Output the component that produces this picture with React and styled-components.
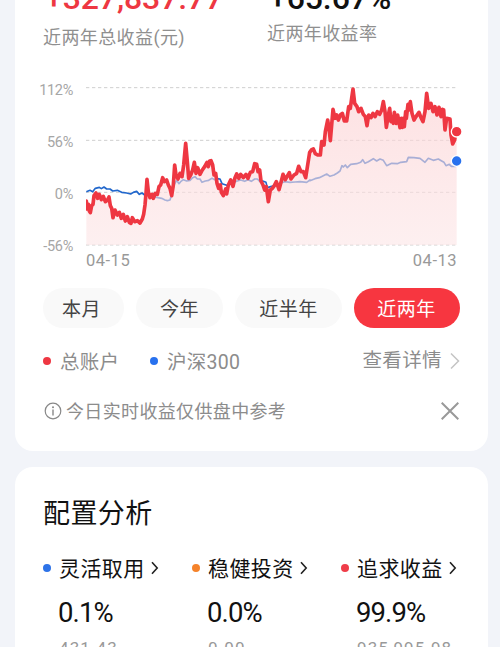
import React from "react";
import styled, { createGlobalStyle } from "styled-components";

// chart units are thirds of a pixel, each series is recorded in three runs
const run = (offset, points) =>
  points.split(" ").map((p) => {
    const [x, y] = p.split(",").map(Number);
    return [x + offset, y];
  });

const account = [
  ...run(0, "169,378 171,402 175,388 178,408 181,413 185,392 189,388 192,362 198,354 203,370 208,358 214,374 220,364 226,380 232,376 237,366 241,392 245,400 249,428 255,405 262,420 268,412 274,430 280,418 286,438 292,425 298,442 303,445 307,428 314,440 322,437 330,444 337,432 341,418 345,390 348,355 351,313 355,350 360,368 366,358 370,370 376,355 382,358 387,335 392,330 398,308 403,320 410,315 415,330 420,340 425,362 430,330 434,270 438,300 444,312 450,295 456,305 461,270"),
  ...run(390, "77,205 82,260 86,310 92,300 98,285 103,262 108,295 113,278 120,298 127,285 134,275 141,262 145,275 149,258 153,257 158,270 162,300 167,295 171,325 176,340 181,330 184,352 190,362 197,342 200,357 205,330 212,315 219,334 225,308 230,297 236,310 242,298 250,308 258,298 264,310 271,292 278,290 284,266 290,268 294,290 299,285 303,318 309,330 314,345 319,335 325,380 331,345 337,340 343,332 349,320 357,344 364,318 369,298 376,314 381,305 388,293 393,312 402,300 410,295 416,274 423,290 430,290 437,308 443,270 449,232"),
  ...run(840, "5,224 10,222 16,236 23,240 31,240 35,200 42,210 46,170 53,135 57,160 61,197 65,150 69,103 75,130 80,120 85,135 91,120 97,115 103,138 110,138 116,95 121,100 125,70 129,42 134,85 141,95 146,110 153,100 160,118 166,125 171,152 176,120 183,128 189,115 195,125 202,110 209,118 215,105 220,80 225,110 229,157 235,120 239,100 243,140 246,130 250,145 253,112 259,145 263,120 270,158 274,130 277,157 280,130 283,155 287,110 289,130 294,88 297,105 301,80 306,115 312,135 318,125 327,112 333,128 339,140 345,110 350,55 356,100 363,85 369,110 375,95 381,120 387,97 393,125 397,103 401,105 405,165 410,130 420,132 423,180 428,207 434,195 437,170"),
];

const index300 = [
  ...run(0, "169,350 180,346 188,350 196,340 208,337 214,341 222,336 230,342 240,342 248,348 262,346 275,352 290,354 302,357 310,352 320,349 328,358 336,354 344,360 352,356 360,364 380,367 395,370 405,375 412,377 420,375 426,355 432,330 440,316 447,326 452,320 460,314 470,318"),
  ...run(390, "90,316 98,308 105,305 112,312 120,312 126,322 136,318 146,316 156,310 164,314 172,311 180,312 186,326 198,330 204,333 212,325 222,322 232,318 242,315 254,319 264,314 274,319 284,312 292,312 300,320 308,318 318,322 322,338 332,335 345,332 360,325 375,320 390,322 405,321 420,320 440,322 450,315"),
  ...run(840, "0,317 15,311 28,308 40,302 50,297 60,304 72,300 82,294 90,288 96,272 100,276 106,270 112,278 122,268 140,266 152,262 158,254 165,265 175,260 190,251 200,258 210,252 220,256 230,272 245,265 262,266 272,262 290,260 295,247 312,248 330,250 345,262 355,250 370,256 385,252 395,258 402,262 408,272 418,268 424,274 437,274"),
];

const toPath = (points) => "M" + points.map((p) => p.join(" ")).join("L");

const gridLines = [38, 196, 352, 510];
const yLabels = ["112%", "56%", "0%", "-56%"];

const periods = [
  { label: "本月", width: 81, shift: 4 },
  { label: "今年", width: 87, shift: 0 },
  { label: "近半年", width: 107, shift: 0 },
  { label: "近两年", width: 106, shift: 1, active: true },
];

const allocations = [
  { name: "灵活取用", percent: "0.1%", amount: "431.43", color: "#2d73e8" },
  { name: "稳健投资", percent: "0.0%", amount: "0.00", color: "#f5832b" },
  { name: "追求收益", percent: "99.9%", amount: "935,995.98", color: "#ef3d49" },
];

const ProfitChart = () => (
  <ChartRow>
    <YAxis>
      {yLabels.map((label) => (
        <span key={label}>{label}</span>
      ))}
    </YAxis>
    <Plot>
      <svg width="380" height="166" viewBox="168 18 1140 498">
        <defs>
          <linearGradient id="profitFill" x1="0" y1="0" x2="0" y2="1">
            <stop offset="0" stopColor="#fccfd1" />
            <stop offset="1" stopColor="#fce6e7" />
          </linearGradient>
        </defs>
        {gridLines.map((y) => (
          <path key={y} d={`M168 ${y}H1276`} stroke="#cfcfcf" strokeWidth="3" strokeDasharray="10 8" />
        ))}
        <path d={toPath(index300)} fill="none" stroke="#2167cc" strokeWidth="5" strokeLinejoin="round" />
        <path d={`${toPath(account)}L1280 170V510H169Z`} fill="url(#profitFill)" opacity="0.62" />
        <path d={toPath(account)} fill="none" stroke="#ee3742" strokeWidth="11" strokeLinejoin="round" strokeLinecap="round" />
        <circle cx="1280" cy="170" r="16" fill="#ee3742" stroke="#fff" strokeWidth="4" />
        <circle cx="1280" cy="258" r="16" fill="#2871ee" stroke="#fff" strokeWidth="4" />
      </svg>
      <XAxis>
        <span>04-15</span>
        <span>04-13</span>
      </XAxis>
    </Plot>
  </ChartRow>
);

const App = () => (
  <Page>
    <GlobalStyle />
    <ProfitCard>
      <Summary>
        <Stat $width={224}>
          <Amount $color="#ee3742">+327,837.77</Amount>
          <StatLabel $top={12}>近两年总收益(元)</StatLabel>
        </Stat>
        <Stat>
          <Amount $color="#111">+65.67%</Amount>
          <StatLabel $top={8}>近两年收益率</StatLabel>
        </Stat>
      </Summary>

      <ProfitChart />

      <Periods>
        {periods.map((p) => (
          <Period key={p.label} $width={p.width} $shift={p.shift} $active={p.active}>
            {p.label}
          </Period>
        ))}
      </Periods>

      <Legend>
        <LegendItem $width={107}>
          <Dot $color="#ee3742" />
          <LegendText>总账户</LegendText>
        </LegendItem>
        <LegendItem>
          <Dot $color="#2871ee" />
          <LegendText>沪深300</LegendText>
        </LegendItem>
        <Detail>
          <span>查看详情</span>
          <svg width="10" height="18" viewBox="0 0 10 18">
            <path d="M1 1.5L8.5 9L1 16.5" fill="none" stroke="#c4c4c4" strokeWidth="1.5" />
          </svg>
        </Detail>
      </Legend>

      <Notice>
        <svg width="18" height="18" viewBox="0 0 18 18">
          <circle cx="9" cy="9" r="7.8" fill="none" stroke="#888" strokeWidth="1.2" />
          <path d="M9 7.6V13.4" stroke="#888" strokeWidth="1.4" />
          <circle cx="9" cy="5.2" r="1" fill="#888" />
        </svg>
        <NoticeText>今日实时收益仅供盘中参考</NoticeText>
        <svg width="18" height="18" viewBox="0 0 18 18">
          <path d="M0.7 0.7L17.3 17.3M17.3 0.7L0.7 17.3" stroke="#999" strokeWidth="2" />
        </svg>
      </Notice>
    </ProfitCard>

    <AllocationCard>
      <Title>配置分析</Title>
      <Allocations>
        {allocations.map((a) => (
          <Allocation key={a.name}>
            <AllocationName>
              <Dot $color={a.color} />
              <span>{a.name}</span>
              <svg width="8" height="14" viewBox="0 0 8 14">
                <path d="M1 1.2L6.2 7L1 12.8" fill="none" stroke="#222" strokeWidth="1.6" />
              </svg>
            </AllocationName>
            <Percent>{a.percent}</Percent>
            <Money>{a.amount}</Money>
          </Allocation>
        ))}
      </Allocations>
    </AllocationCard>
  </Page>
);

export default App;

const GlobalStyle = createGlobalStyle`
  * {
    box-sizing: border-box;
  }
  body {
    margin: 0;
    overflow: hidden;
    font-family: Roboto, "Noto Sans CJK SC", sans-serif;
  }
  svg {
    display: block;
    flex-shrink: 0;
  }
`;
const Page = styled.div`
  width: 500px;
  height: 647px;
  overflow: hidden;
  padding: 0 12px 0 15px;
  background: #f2f4f9;
`;
const ProfitCard = styled.section`
  height: 451px;
  padding: 0 27px 0 28px;
  background: #fff;
  border-radius: 0 0 18px 18px;
`;
const Summary = styled.div`
  display: flex;
  height: 81px;
`;
const Stat = styled.div`
  width: ${({ $width }) => ($width ? `${$width}px` : "auto")};
`;
const Amount = styled.div`
  height: 36px;
  margin-top: -20px;
  padding-left: 2px;
  line-height: 36px;
  font-size: 32px;
  font-weight: 500;
  white-space: nowrap;
  letter-spacing: -0.1px;
  color: ${({ $color }) => $color};
`;
const StatLabel = styled.div`
  margin-top: ${({ $top }) => $top}px;
  line-height: 20px;
  font-size: 18px;
  letter-spacing: 0.4px;
  color: #8f8f8f;
`;
const ChartRow = styled.div`
  display: flex;
  height: 207px;
`;
const YAxis = styled.div`
  display: flex;
  flex-direction: column;
  align-items: flex-end;
  gap: 32px;
  width: 30px;
  margin-right: 13px;
  white-space: nowrap;
  line-height: 20px;
  font-size: 14.5px;
  letter-spacing: -0.3px;
  color: #a6a6a6;
`;
const Plot = styled.div`
  width: 380px;
`;
const XAxis = styled.div`
  display: flex;
  justify-content: space-between;
  width: 371px;
  margin-top: 4px;
  line-height: 20px;
  font-size: 16.5px;
  letter-spacing: 0.5px;
  color: #999;
`;
const Periods = styled.div`
  display: flex;
  gap: 12px;
`;
const Period = styled.button`
  width: ${({ $width }) => $width}px;
  height: 40px;
  padding: 0 ${({ $shift }) => $shift}px 2px 0;
  border: 0;
  border-radius: 20px;
  font-family: inherit;
  font-size: 19px;
  letter-spacing: 0.5px;
  color: ${({ $active }) => ($active ? "#fff" : "#444")};
  background: ${({ $active }) => ($active ? "#f73640" : "#f9f9f9")};
`;
const Legend = styled.div`
  display: flex;
  align-items: center;
  height: 28px;
  margin-top: 19px;
  font-size: 19px;
  color: #8c8c8c;
`;
const LegendItem = styled.div`
  display: flex;
  align-items: center;
  width: ${({ $width }) => ($width ? `${$width}px` : "auto")};
`;
const LegendText = styled.span`
  padding-bottom: 2px;
  font-size: 19.5px;
  letter-spacing: 0.3px;
`;
const Dot = styled.i`
  flex-shrink: 0;
  width: 8px;
  height: 8px;
  margin-right: 9px;
  border-radius: 50%;
  background: ${({ $color }) => $color};
`;
const Detail = styled.div`
  display: flex;
  align-items: center;
  gap: 8px;
  margin: 0 1px 0 auto;
  font-size: 19.5px;
  letter-spacing: 0.4px;
  span {
    padding-bottom: 6px;
  }
`;
const Notice = styled.div`
  display: flex;
  align-items: center;
  height: 26px;
  margin-top: 23px;
  padding: 0 2px 0 1px;
  color: #8c8c8c;
`;
const NoticeText = styled.span`
  flex: 1;
  margin-left: 4px;
  padding-bottom: 2px;
  font-size: 18px;
  letter-spacing: 0.35px;
`;
const AllocationCard = styled.section`
  height: 230px;
  margin-top: 16px;
  padding: 27px 0 0 28px;
  background: #fff;
  border-radius: 18px;
`;
const Title = styled.h2`
  margin: 0;
  line-height: 40px;
  font-size: 27px;
  font-weight: 400;
  letter-spacing: 0.4px;
  color: #111;
`;
const Allocations = styled.div`
  display: flex;
  margin-top: 19px;
`;
const Allocation = styled.div`
  width: 149px;
  flex-shrink: 0;
`;
const AllocationName = styled.div`
  display: flex;
  align-items: center;
  height: 30px;
  font-size: 21px;
  letter-spacing: 0.4px;
  color: #111;
  white-space: nowrap;
  ${Dot} {
    margin-right: 8px;
  }
  span {
    padding-bottom: 2px;
  }
  svg {
    margin-left: 6px;
  }
`;
const Percent = styled.div`
  margin: 12px 0 0 15px;
  line-height: 36px;
  font-size: 27.5px;
  letter-spacing: -0.9px;
  color: #111;
`;
const Money = styled.div`
  margin: 6px 0 0 16px;
  line-height: 22px;
  font-size: 17px;
  letter-spacing: 1.1px;
  color: #999;
`;
